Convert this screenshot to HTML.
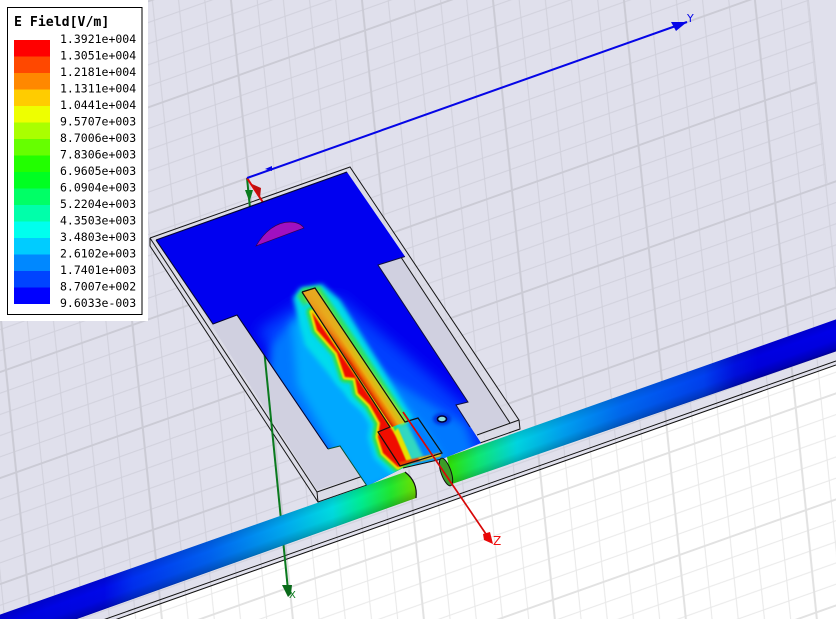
<!DOCTYPE html>
<html>
<head>
<meta charset="utf-8">
<style>
html,body{margin:0;padding:0;background:#e0e0ec;}
body{width:836px;height:619px;overflow:hidden;position:relative;}
svg{position:absolute;left:0;top:0;display:block;}
</style>
</head>
<body>
<svg width="836" height="619" viewBox="0 0 836 619" xmlns="http://www.w3.org/2000/svg">
<defs>
<pattern id="g1" patternUnits="userSpaceOnUse" width="126.5" height="102.4" patternTransform="matrix(1,-0.355,0.1,1,491.5,-14.5)">
<g stroke="#d0d0db" stroke-width="1" fill="none">
<path d="M25.3,0V102.4M50.6,0V102.4M75.9,0V102.4M101.2,0V102.4M0,20.5H126.5M0,41H126.5M0,61.4H126.5M0,81.9H126.5"/>
</g>
<path d="M0,0V102.4M126.5,0V102.4M0,0H126.5M0,102.4H126.5" stroke="#cbcbd5" stroke-width="2" fill="none"/>
</pattern>
<pattern id="g2" patternUnits="userSpaceOnUse" width="126.5" height="102.4" patternTransform="matrix(1,-0.355,0.1,1,491.5,-14.5)">
<g stroke="#e8e8e8" stroke-width="1" fill="none">
<path d="M25.3,0V102.4M50.6,0V102.4M75.9,0V102.4M101.2,0V102.4M0,20.5H126.5M0,41H126.5M0,61.4H126.5M0,81.9H126.5"/>
</g>
<path d="M0,0V102.4M126.5,0V102.4M0,0H126.5M0,102.4H126.5" stroke="#e2e2e2" stroke-width="2" fill="none"/>
</pattern>
<clipPath id="gnd"><polygon points="156,240 347,172 405,256.5 378,265 468,402 456,405 481,443 442,459 403,468 367,486 340,446 328,449 237,315 213,324"/></clipPath>
<clipPath id="wh"><polygon points="100,625 836,365 836,625"/></clipPath>
<filter id="b8" x="-30%" y="-30%" width="160%" height="160%"><feGaussianBlur stdDeviation="7"/></filter>
<filter id="b5" x="-30%" y="-30%" width="160%" height="160%"><feGaussianBlur stdDeviation="4.5"/></filter>
<filter id="b3" x="-30%" y="-30%" width="160%" height="160%"><feGaussianBlur stdDeviation="2.5"/></filter>
<filter id="b2" x="-30%" y="-30%" width="160%" height="160%"><feGaussianBlur stdDeviation="1.5"/></filter>
<filter id="b1" x="-30%" y="-30%" width="160%" height="160%"><feGaussianBlur stdDeviation="0.7"/></filter>
<linearGradient id="strip" gradientUnits="userSpaceOnUse" x1="302" y1="292" x2="312.8" y2="284.8">
<stop offset="0" stop-color="#c81800"/><stop offset=".22" stop-color="#f06000"/><stop offset=".55" stop-color="#eab010"/><stop offset="1" stop-color="#c4cc20"/>
</linearGradient>
<linearGradient id="stripTop" gradientUnits="userSpaceOnUse" x1="305" y1="290" x2="350" y2="360">
<stop offset="0" stop-color="#e8a820" stop-opacity="1"/><stop offset=".5" stop-color="#e8a820" stop-opacity=".7"/><stop offset="1" stop-color="#e8a820" stop-opacity="0"/>
</linearGradient>
<linearGradient id="tl" gradientUnits="userSpaceOnUse" x1="0" y1="0" x2="416" y2="0">
<stop offset="0" stop-color="#0000e0"/><stop offset=".25" stop-color="#0008e8"/><stop offset=".32" stop-color="#0030f0"/><stop offset=".5" stop-color="#0060f0"/><stop offset=".68" stop-color="#00a8f0"/><stop offset=".8" stop-color="#00dce0"/><stop offset=".87" stop-color="#00ee90"/><stop offset=".94" stop-color="#20e830"/><stop offset="1" stop-color="#70e000"/>
</linearGradient>
<linearGradient id="tr" gradientUnits="userSpaceOnUse" x1="447" y1="0" x2="836" y2="0">
<stop offset="0" stop-color="#30e000"/><stop offset=".08" stop-color="#10e870"/><stop offset=".18" stop-color="#00d4e0"/><stop offset=".3" stop-color="#00a0f0"/><stop offset=".45" stop-color="#0068f0"/><stop offset=".66" stop-color="#0040f0"/><stop offset=".74" stop-color="#0010e0"/><stop offset=".8" stop-color="#0000e0"/><stop offset="1" stop-color="#0000e8"/>
</linearGradient>
<linearGradient id="shadeL" gradientUnits="userSpaceOnUse" x1="200" y1="544" x2="211" y2="575">
<stop offset="0" stop-color="#000" stop-opacity=".12"/><stop offset=".3" stop-color="#000" stop-opacity="0"/><stop offset=".6" stop-color="#000" stop-opacity=".03"/><stop offset=".85" stop-color="#000" stop-opacity=".2"/><stop offset="1" stop-color="#000" stop-opacity=".5"/>
</linearGradient>
<linearGradient id="shadeR" gradientUnits="userSpaceOnUse" x1="640" y1="388" x2="651" y2="419">
<stop offset="0" stop-color="#000" stop-opacity=".12"/><stop offset=".3" stop-color="#000" stop-opacity="0"/><stop offset=".6" stop-color="#000" stop-opacity=".03"/><stop offset=".85" stop-color="#000" stop-opacity=".2"/><stop offset="1" stop-color="#000" stop-opacity=".5"/>
</linearGradient>
</defs>

<!-- background and grid -->
<rect width="836" height="619" fill="#e0e0ec"/>
<rect width="836" height="619" fill="url(#g1)"/>
<polygon points="809,0 827,183 836,180 836,0" fill="#e0e0ec"/>
<path d="M808.5,0L827,183" stroke="#d0d0db" stroke-width="1" fill="none"/>

<!-- white region -->
<g clip-path="url(#wh)"><rect width="836" height="625" fill="#fff"/><rect width="836" height="625" fill="url(#g2)"/></g>
<path d="M100,621L836,361M106,623L836,365" stroke="#111" stroke-width="1" fill="none"/>

<!-- substrate -->
<polygon points="150,238 350,167 519,420 520,429 480,443 370,485 318,502 150,246" fill="#dadae6" fill-opacity=".7"/>
<polygon points="157,240 345,172 510,422 365,475 317,490" fill="#d0d0e0"/>
<g stroke="#151515" stroke-width="1" fill="none">
<path d="M150,238L350,167L519,420L520,429L480,443"/>
<path d="M150,238L150,246L318,502L370,484"/>
<path d="M150,238L317,492L366,475"/>
<path d="M345,172L510,423"/>
<path d="M477,435L519,420"/>
<path d="M317,492L318,502"/>
</g>

<!-- axes behind the plate -->
<path d="M247,178L288,590" stroke="#0a7a1e" stroke-width="2" fill="none"/>
<polygon points="245,190 253,190 249.5,202" fill="#0a7a1e"/>
<polygon points="282,585 292,585 291,594 288,597" fill="#0a6a1a"/>
<path d="M247,178L268,210" stroke="#dd0808" stroke-width="2" fill="none"/>
<polygon points="252,184 261,188 260,198" fill="#c01010"/>

<!-- ground plate -->
<polygon points="156,240 347,172 405,256.5 378,265 468,402 456,405 481,443 442,459 403,468 367,486 340,446 328,449 237,315 213,324" fill="#0000f0"/>
<g clip-path="url(#gnd)">
<polygon points="258,330 298,304 340,298 395,345 470,410 490,450 370,495 330,450" fill="#0040ff" filter="url(#b8)"/>
<polygon points="272,345 296,315 325,310 385,375 465,425 475,455 360,492 320,445 268,372" fill="#0078ff" filter="url(#b5)"/>
<polygon points="292,325 320,305 370,360 425,430 445,462 400,476 365,492 325,435 297,385" fill="#00a8ff" filter="url(#b5)"/>
<polygon points="293,298 300,288 322,284 340,300 372,352 412,418 395,440 350,400 305,345" fill="#00dcec" filter="url(#b3)"/>
<polygon points="297,296 303,288 320,286 360,345 409,420 395,435 330,345" fill="#30e060" filter="url(#b2)"/>
<polygon points="305,296 317,290 352,345 407,422 392,430 320,330" fill="#d8e820" filter="url(#b2)"/>
<g filter="url(#b3)">
<polygon points="312,312 317,330 337,353 345,377 355,378 358,393 370,405 380,423 378,437 383,453 398,467 405,462 395,437 390,427" fill="#00d8f0" stroke="#00d8f0" stroke-width="20" stroke-linejoin="round"/>
</g>
<g filter="url(#b2)">
<polygon points="312,312 317,330 337,353 345,377 355,378 358,393 370,405 380,423 378,437 383,453 398,467 405,462 395,437 390,427" fill="#30e040" stroke="#30e040" stroke-width="11" stroke-linejoin="round"/>
</g>
<g filter="url(#b1)">
<polygon points="312,312 317,330 337,353 345,377 355,378 358,393 370,405 380,423 378,437 383,453 398,467 405,462 395,437 390,427" fill="#f0e000" stroke="#f0e000" stroke-width="5" stroke-linejoin="round"/>
</g>
<polygon points="312,312 317,330 337,353 345,377 355,378 358,393 370,405 380,423 378,437 383,453 398,467 408,463 397,437 390,427" fill="#f00c00" filter="url(#b1)"/>
<!-- lower wide slot lateral field -->
<polygon points="408,423 417,419 442,453 420,458" fill="#0080ff" filter="url(#b3)"/>
<polygon points="398,428 407,424 424,458 412,461" fill="#30d8c0" filter="url(#b2)"/>
<polygon points="394,432 398,428 412,460 407,462" fill="#e8e000" filter="url(#b1)"/>
<polygon points="399,462 440,453 441,456 401,466" fill="#f04000" filter="url(#b1)"/>
<polygon points="418,458 440,453 441,456 420,461" fill="#e0d820" filter="url(#b1)"/>
</g>

<!-- strip -->
<polygon points="302,292 315,288 405,422 392,427" fill="url(#strip)"/>
<polygon points="302,292 315,288 405,422 392,427" fill="url(#stripTop)"/>
<path d="M302,292L315,288L405,422L418,418L442,453L400,466L378,432L390,427L302,292" stroke="#101010" stroke-width="1.2" fill="none"/>
<path d="M403,468L442,459" stroke="#101010" stroke-width="1" fill="none"/>

<!-- plate outline -->
<path d="M156,240L347,172M156,240L213,324L237,315L328,449" stroke="#050530" stroke-width="1.1" fill="none"/>
<path d="M405,256.5L378,265L468,402L456,405L470,427" stroke="#101040" stroke-width="1" fill="none"/>
<path d="M328,449L340,446L367,486" stroke="#0a5030" stroke-width="1" fill="none"/>

<!-- hole -->
<ellipse cx="442" cy="419" rx="9" ry="6" fill="#0030e0" filter="url(#b2)"/>
<ellipse cx="442" cy="419" rx="4.5" ry="3" fill="#8ce0e0" stroke="#000030" stroke-width="1.6"/>

<!-- purple half disc -->
<path d="M256,246C264,232 276,222 290,222C296,222 301,224 304,228Z" fill="#a010c0" stroke="#300050" stroke-width=".7"/>

<!-- tubes -->
<path d="M-4,616L405,472Q417,482 416,498L77,619L-4,640Z" fill="url(#tl)"/>
<path d="M-4,616L405,472Q417,482 416,498L77,619L-4,640Z" fill="url(#shadeL)"/>
<path d="M405,472Q418,482 416,498" stroke="#101010" stroke-width="1.2" fill="none"/>
<path d="M447,457L840,318L840,350L452,484Z" fill="url(#tr)"/>
<path d="M447,457L840,318L840,350L452,484Z" fill="url(#shadeR)"/>
<ellipse cx="446" cy="472" rx="5" ry="14.5" transform="rotate(-19 446 472)" fill="#3c9c28" stroke="#101010" stroke-width="1"/>

<!-- axes in front -->
<path d="M247,178L687,22" stroke="#0505e8" stroke-width="2" fill="none"/>
<polygon points="671,22 687,22 676,31" fill="#0505e8"/>
<polygon points="265,169 272,166 272,171" fill="#0505e8"/>
<path d="M403,412L488,537" stroke="#d80808" stroke-width="1.7" fill="none"/>
<polygon points="483,534 490,532 493,544 484,540" fill="#e80808"/>
<text x="687" y="22" font-family="'DejaVu Sans',sans-serif" font-size="11" fill="#0505e8">Y</text>
<text x="493" y="545" font-family="'DejaVu Sans',sans-serif" font-size="12" fill="#f01010">Z</text>
<text x="289" y="598" font-family="'DejaVu Sans',sans-serif" font-size="10" fill="#0a7a1e">X</text>

<!-- legend -->
<rect x="0" y="0" width="148" height="321" fill="#fff"/>
<rect x="7.5" y="7.5" width="134.5" height="307" fill="#fff" stroke="#000" stroke-width="1"/>
<g>
<rect x="14" y="40" width="36" height="16.5" fill="#ff0000"/>
<rect x="14" y="56.5" width="36" height="16.5" fill="#ff4800"/>
<rect x="14" y="73" width="36" height="16.5" fill="#ff8800"/>
<rect x="14" y="89.5" width="36" height="16.5" fill="#ffcc00"/>
<rect x="14" y="106" width="36" height="16.5" fill="#eeff00"/>
<rect x="14" y="122.5" width="36" height="16.5" fill="#aaff00"/>
<rect x="14" y="139" width="36" height="16.5" fill="#66ff00"/>
<rect x="14" y="155.5" width="36" height="16.5" fill="#22ff00"/>
<rect x="14" y="172" width="36" height="16.5" fill="#00ff22"/>
<rect x="14" y="188.5" width="36" height="16.5" fill="#00ff66"/>
<rect x="14" y="205" width="36" height="16.5" fill="#00ffaa"/>
<rect x="14" y="221.5" width="36" height="16.5" fill="#00ffee"/>
<rect x="14" y="238" width="36" height="16.5" fill="#00ccff"/>
<rect x="14" y="254.5" width="36" height="16.5" fill="#0088ff"/>
<rect x="14" y="271" width="36" height="16.5" fill="#0044ff"/>
<rect x="14" y="287.5" width="36" height="16.5" fill="#0000ff"/>
</g>
<text x="14" y="26" font-family="'DejaVu Sans Mono',monospace" font-size="13.2" font-weight="700" fill="#000">E Field[V/m]</text>
<g font-family="'DejaVu Sans Mono',monospace" font-size="11.5" fill="#000">
<text x="60" y="43">1.3921e+004</text>
<text x="60" y="59.5">1.3051e+004</text>
<text x="60" y="76">1.2181e+004</text>
<text x="60" y="92.5">1.1311e+004</text>
<text x="60" y="109">1.0441e+004</text>
<text x="60" y="125.5">9.5707e+003</text>
<text x="60" y="142">8.7006e+003</text>
<text x="60" y="158.5">7.8306e+003</text>
<text x="60" y="175">6.9605e+003</text>
<text x="60" y="191.5">6.0904e+003</text>
<text x="60" y="208">5.2204e+003</text>
<text x="60" y="224.5">4.3503e+003</text>
<text x="60" y="241">3.4803e+003</text>
<text x="60" y="257.5">2.6102e+003</text>
<text x="60" y="274">1.7401e+003</text>
<text x="60" y="290.5">8.7007e+002</text>
<text x="60" y="307">9.6033e-003</text>
</g>
</svg>
</body>
</html>
